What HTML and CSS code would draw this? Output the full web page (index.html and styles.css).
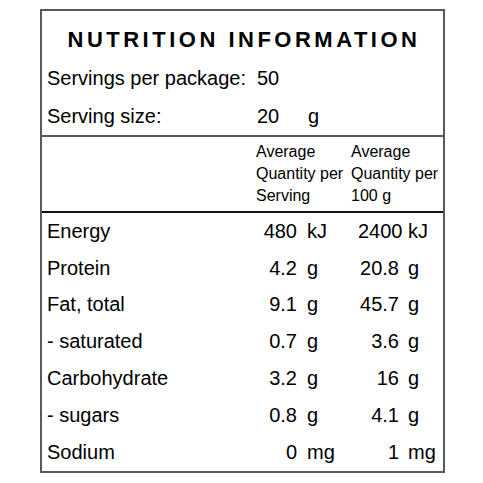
FILE: index.html
```html
<!DOCTYPE html>
<html>
<head>
<meta charset="utf-8">
<link rel="stylesheet" href="styles.css">
</head>
<body>
<div class="panel">
  <h1 class="title">NUTRITION INFORMATION</h1>
  <div class="info">
    <div class="info-row"><span class="info-label">Servings per package:</span><span class="info-val">50</span><span class="info-unit"></span></div>
    <div class="info-row"><span class="info-label">Serving size:</span><span class="info-val">20</span><span class="info-unit">g</span></div>
  </div>
  <div class="head">
    <div class="head-spacer"></div>
    <div class="head-col">Average<br>Quantity per<br>Serving</div>
    <div class="head-col">Average<br>Quantity per<br>100 g</div>
  </div>
  <div class="rows">
    <div class="row"><span class="lbl">Energy</span><span class="num">480</span><span class="unit">kJ</span><span class="num">2400</span><span class="unit">kJ</span></div>
    <div class="row"><span class="lbl">Protein</span><span class="num">4.2</span><span class="unit">g</span><span class="num">20.8</span><span class="unit">g</span></div>
    <div class="row"><span class="lbl">Fat, total</span><span class="num">9.1</span><span class="unit">g</span><span class="num">45.7</span><span class="unit">g</span></div>
    <div class="row"><span class="lbl">- saturated</span><span class="num">0.7</span><span class="unit">g</span><span class="num">3.6</span><span class="unit">g</span></div>
    <div class="row"><span class="lbl">Carbohydrate</span><span class="num">3.2</span><span class="unit">g</span><span class="num">16</span><span class="unit">g</span></div>
    <div class="row"><span class="lbl">- sugars</span><span class="num">0.8</span><span class="unit">g</span><span class="num">4.1</span><span class="unit">g</span></div>
    <div class="row"><span class="lbl">Sodium</span><span class="num">0</span><span class="unit">mg</span><span class="num">1</span><span class="unit">mg</span></div>
  </div>
</div>
</body>
</html>
```
FILE: styles.css
```css
html, body {
  margin: 0;
  padding: 0;
  background: #fff;
}
body {
  padding: 9px 0 0 40px;
  font-family: "Liberation Sans", Arial, sans-serif;
  color: #000;
}
.panel {
  width: 401px;
  border: 2px solid #5a5a5a;
}
.title {
  margin: 0;
  padding-top: 14px;
  font-size: 22px;
  line-height: 30px;
  font-weight: bold;
  letter-spacing: 3.5px;
  text-align: center;
  padding-left: 3px;
}
.info {
  padding-top: 4px;
  border-bottom: 2px solid #555;
}
.info-row {
  display: grid;
  grid-template-columns: 210px 51px 1fr;
  height: 38px;
  align-items: center;
  font-size: 20px;
  padding-left: 5px;
}
.head {
  display: grid;
  grid-template-columns: 214px 95px 1fr;
  font-size: 16px;
  line-height: 22px;
  padding: 4px 0 4px;
  border-bottom: 2px solid #111;
}
.row {
  display: grid;
  grid-template-columns: 209px 41px 61px 41px 1fr;
  height: 36.8px;
  align-items: center;
  font-size: 20px;
  padding-left: 5px;
}
.num {
  text-align: right;
}
.unit {
  padding-left: 10px;
}
.row .unit:last-child {
  padding-left: 9px;
}
```
